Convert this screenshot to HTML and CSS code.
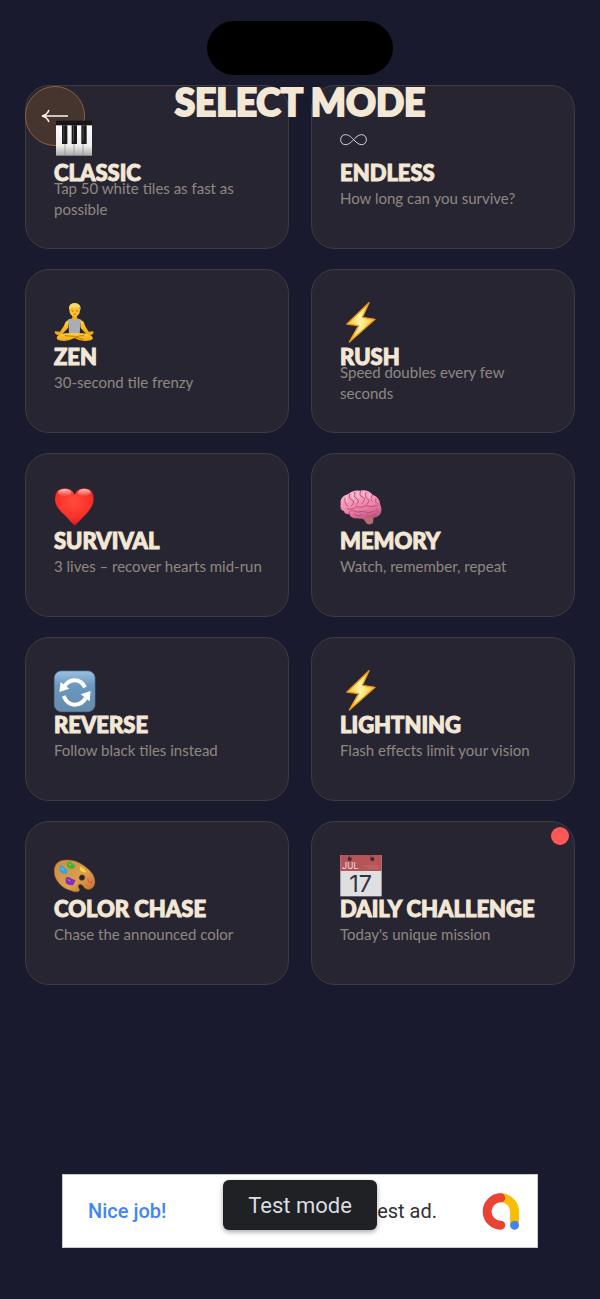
FILE: index.html
```html
<!DOCTYPE html>
<html lang="en">
<head>
  <meta charset="UTF-8">
  <meta name="viewport" content="width=device-width, initial-scale=1.0">
  <title>Select Mode</title>
  <link rel="stylesheet" href="styles.css">
</head>
<body>
  <div class="island"></div>

  <header class="header">
    <button class="back-btn" type="button" aria-label="Back">
      <svg viewBox="0 0 28 14" width="28" height="14" fill="none" stroke="#fdf3e7" stroke-width="1.6">
        <path d="M27 7H2M8 1Q6 6 1 7Q6 8 8 13" />
      </svg>
    </button>
    <h1>SELECT MODE</h1>
  </header>

  <main class="mode-grid">
    <button class="mode-card" type="button">
      <svg class="icon" viewBox="0 0 126 126">
        <defs>
          <linearGradient id="keys" x1="0" y1="0" x2="0" y2="1">
            <stop offset="0" stop-color="#fff" />
            <stop offset="0.7" stop-color="#eee" />
            <stop offset="1" stop-color="#aaa" />
          </linearGradient>
        </defs>
        <rect x="6" y="8" width="108" height="102" fill="url(#keys)" />
        <path d="M33 70V110M60 70V110M87 70V110" stroke="#888" stroke-width="2" />
        <rect x="6" y="5" width="108" height="14" fill="#161619" />
        <path d="M24 19h16v56H24zM53 19h16v56H53zM82 19h16v56H82z" fill="#18181a" />
        <path d="M28 20h3v48h-3zM57 20h3v48h-3zM86 20h3v48h-3z" fill="#48484b" />
      </svg>
      <span class="mode-title">CLASSIC</span>
      <span class="mode-desc"><span>Tap 50 white tiles as fast as possible</span></span>
    </button>

    <button class="mode-card" type="button">
      <svg class="icon" viewBox="0 0 126 126" fill="none" stroke="#d5d1d5" stroke-width="3">
        <path d="M41 62C31 51 24 47 16 47C7 47 2 54 2 62C2 70 7 77 16 77C24 77 31 73 41 62C51 51 58 47 65 47C74 47 79 54 79 62C79 70 74 77 65 77C58 77 51 73 41 62Z" />
      </svg>
      <span class="mode-title">ENDLESS</span>
      <span class="mode-desc"><span>How long can you survive?</span></span>
    </button>

    <button class="mode-card" type="button">
      <svg class="icon" viewBox="0 0 126 126">
        <defs>
          <linearGradient id="skin" x1="0" y1="0" x2="0" y2="1">
            <stop offset="0" stop-color="#ffd23c" />
            <stop offset="1" stop-color="#f5a40f" />
          </linearGradient>
        </defs>
        <path d="M46 50Q34 52 30 68L18 86L3 85Q0 91 9 96L23 95L42 75ZM78 50Q90 52 93 68L104 86L117 85Q122 91 112 96L99 95L80 75Z" fill="url(#skin)" />
        <path d="M55 34h14v18H55z" fill="#eda313" />
        <path d="M43 49Q62 43 80 49L77 92Q61 98 45 92Z" fill="#a9adb5" />
        <path d="M54 46Q62 59 70 46L67 43H57Z" fill="#f4b01c" />
        <path d="M8 106Q9 92 36 91Q61 89 86 91Q113 92 117 106Q115 114 91 114Q74 113 61 105Q48 113 31 114Q11 114 8 106Z" fill="url(#skin)" />
        <path d="M32 98Q58 96 89 110M91 98Q76 96 64 104" fill="none" stroke="#b96809" stroke-width="2.5" />
        <ellipse cx="62" cy="21" rx="16" ry="20" fill="#ffc22b" />
        <path d="M45 20Q43 0 62 0Q81 0 80 21Q76 17 75 11Q59 15 49 12Q48 18 45 20Z" fill="#f6dc73" />
        <path d="M53 23q3 3 6 0M66 23q3 3 6 0" fill="none" stroke="#70430e" stroke-width="2" />
        <path d="M58 33Q62 36 67 33" fill="none" stroke="#bd4e1c" stroke-width="2" />
      </svg>
      <span class="mode-title">ZEN</span>
      <span class="mode-desc"><span>30-second tile frenzy</span></span>
    </button>

    <button class="mode-card" type="button">
      <svg class="icon" viewBox="0 0 126 126">
        <defs>
          <linearGradient id="bolt" x1="0" y1="0" x2="1" y2="0">
            <stop offset="0" stop-color="#ffb61f" />
            <stop offset="0.45" stop-color="#fff5a8" />
            <stop offset="1" stop-color="#ffc530" />
          </linearGradient>
        </defs>
        <path d="M87 -1L21 63L56 68L28 117L105 49L67 43Z" fill="url(#bolt)" stroke="#f39a13" stroke-width="4" stroke-linejoin="round" />
      </svg>
      <span class="mode-title">RUSH</span>
      <span class="mode-desc"><span>Speed doubles every few seconds</span></span>
    </button>

    <button class="mode-card" type="button">
      <svg class="icon" viewBox="0 0 126 126">
        <defs>
          <radialGradient id="heart" cx="0.48" cy="0.35" r="0.7">
            <stop offset="0" stop-color="#ff4b3c" />
            <stop offset="0.65" stop-color="#fa3029" />
            <stop offset="1" stop-color="#c61219" />
          </radialGradient>
          <linearGradient id="shine" x1="0" y1="0" x2="0" y2="1">
            <stop offset="0" stop-color="#fff" stop-opacity="0.7" />
            <stop offset="1" stop-color="#fff" stop-opacity="0" />
          </linearGradient>
        </defs>
        <path d="M62 116Q55 111 36 88Q3 62 3 35Q3 4 33 4Q53 4 62 23Q71 4 91 4Q119 4 119 35Q119 60 90 88Q70 109 62 116Z" fill="url(#heart)" />
        <ellipse cx="32" cy="17" rx="20" ry="11" fill="url(#shine)" />
        <ellipse cx="91" cy="17" rx="19" ry="11" fill="url(#shine)" />
      </svg>
      <span class="mode-title">SURVIVAL</span>
      <span class="mode-desc"><span>3 lives – recover hearts mid-run</span></span>
    </button>

    <button class="mode-card" type="button">
      <svg class="icon" viewBox="0 0 126 126">
        <defs>
          <linearGradient id="brain" x1="0.3" y1="0" x2="0.7" y2="1">
            <stop offset="0" stop-color="#ffb6cd" />
            <stop offset="0.6" stop-color="#ef81a9" />
            <stop offset="1" stop-color="#bd557d" />
          </linearGradient>
        </defs>
        <path d="M68 84Q87 80 101 87L99 108Q87 116 79 109Q73 97 66 94Z" fill="#b76c70" />
        <path d="M2 52Q-1 28 23 22Q39 8 60 11Q83 6 98 23Q119 30 120 51Q130 72 118 85Q105 98 83 92Q66 98 52 94Q32 96 29 82Q14 83 12 73Q-1 70 2 52Z" fill="url(#brain)" />
        <g fill="none" stroke="#bb5179" stroke-width="3" stroke-linecap="round">
          <path d="M22 66Q42 68 48 59Q65 64 77 56Q95 62 113 55M29 82Q22 70 39 71Q55 79 67 73Q86 81 103 73" />
          <path d="M15 34Q13 51 23 57M29 21Q25 35 36 39T34 57M45 16Q38 28 50 35T48 53M62 12Q55 27 68 30T65 51M79 16Q71 27 82 35T80 52M97 25Q87 36 97 43M108 35Q102 46 114 51M43 81Q54 91 65 83M79 84Q95 91 109 81M112 65Q102 72 116 76" />
        </g>
        <path d="M20 29Q16 41 22 47M39 20Q34 29 42 37M55 17Q51 26 57 33M72 17Q68 24 75 31M89 22Q84 29 91 35" fill="none" stroke="#ffd3df" stroke-width="3" />
      </svg>
      <span class="mode-title">MEMORY</span>
      <span class="mode-desc"><span>Watch, remember, repeat</span></span>
    </button>

    <button class="mode-card" type="button">
      <svg class="icon" viewBox="0 0 126 126">
        <defs>
          <linearGradient id="tile" x1="0" y1="0" x2="0" y2="1">
            <stop offset="0" stop-color="#9bc1e1" />
            <stop offset="0.35" stop-color="#6c98bf" />
            <stop offset="1" stop-color="#658bad" />
          </linearGradient>
        </defs>
        <rect x="1" y="0" width="122" height="122" rx="21" fill="url(#tile)" stroke="#587e9f" stroke-width="2" />
        <path d="M93 49Q82 27 60 28Q42 29 31 46M29 75Q40 101 62 101Q85 100 95 81" fill="none" stroke="#fff" stroke-width="12" />
        <path d="M20 33L16 63L46 53ZM80 70L110 60L107 91Z" fill="#fff" />
      </svg>
      <span class="mode-title">REVERSE</span>
      <span class="mode-desc"><span>Follow black tiles instead</span></span>
    </button>

    <button class="mode-card" type="button">
      <svg class="icon" viewBox="0 0 126 126">
        <path d="M87 -1L21 63L56 68L28 117L105 49L67 43Z" fill="url(#bolt)" stroke="#f39a13" stroke-width="4" stroke-linejoin="round" />
      </svg>
      <span class="mode-title">LIGHTNING</span>
      <span class="mode-desc"><span>Flash effects limit your vision</span></span>
    </button>

    <button class="mode-card" type="button">
      <svg class="icon" viewBox="0 0 126 126">
        <defs>
          <linearGradient id="wood" x1="0" y1="0" x2="1" y2="1">
            <stop offset="0" stop-color="#c98d42" />
            <stop offset="0.6" stop-color="#dda050" />
            <stop offset="1" stop-color="#ba7128" />
          </linearGradient>
        </defs>
        <path d="M1 42Q5 16 34 15Q64 12 91 33Q125 57 123 83Q118 105 100 103Q91 101 87 92Q78 84 73 91Q71 97 77 105Q73 115 52 107Q25 101 10 78Q-1 63 1 42ZM80 60Q72 65 77 74Q85 80 92 72Q96 61 85 59Z" fill="url(#wood)" fill-rule="evenodd" stroke="#a8662a" stroke-width="1.5" />
        <path d="M40 21Q52 17 56 28L65 31L58 41Q43 42 39 32Z" fill="#39b62e" />
        <path d="M17 33Q29 28 32 39L42 44L38 57L26 56Q15 50 17 43Z" fill="#35a6df" />
        <path d="M79 34Q91 39 97 52L87 52L77 45Z" fill="#f7d83b" />
        <path d="M35 69Q44 62 53 71L65 76L57 91Q43 92 35 84Z" fill="#852db8" />
        <path d="M99 68Q112 72 116 87L103 82Z" fill="#f15445" />
        <path d="M44 26l7 5M22 39l7 6M41 73l8 5M104 73l5 5" stroke="#fff" stroke-opacity="0.45" stroke-width="3" />
      </svg>
      <span class="mode-title">COLOR CHASE</span>
      <span class="mode-desc"><span>Chase the announced color</span></span>
    </button>

    <button class="mode-card" type="button">
      <svg class="icon" viewBox="0 0 126 126">
        <rect x="1" y="0" width="124" height="124" fill="#dfdfe1" />
        <rect x="1" y="0" width="124" height="48" fill="#b55558" />
        <circle cx="29" cy="12" r="6" fill="#332a31" />
        <circle cx="97" cy="12" r="6" fill="#332a31" />
        <path d="M28 1v10M90 1l6 9" stroke="#6c3940" stroke-width="3" />
        <path d="M70 33h45M83 39h34" stroke="#c56c6e" stroke-width="3" />
        <text class="cal-month" x="6" y="42">JUL</text>
        <text class="cal-day" x="62" y="111">17</text>
      </svg>
      <span class="mode-title">DAILY CHALLENGE</span>
      <span class="mode-desc"><span>Today's unique mission</span></span>
      <span class="badge"></span>
    </button>
  </main>

  <!-- Ad banner -->
  <aside class="ad">
    <span class="ad-praise">Nice job!</span>
    <span class="ad-text">This is a test ad.</span>
    <svg class="ad-logo" viewBox="0 0 108 108" fill="none" stroke-width="26" stroke-linecap="round">
      <path d="M55 14A40 40 0 0 1 95 54V94" stroke="#fbbc04" />
      <path d="M55 14A40 40 0 0 0 55 94" stroke="#ea4335" />
      <circle cx="95" cy="94" r="13" fill="#4285f4" />
    </svg>
    <span class="toast">Test mode</span>
  </aside>
</body>
</html>
```
FILE: styles.css
```css
/* Global Styles */
* {
  box-sizing: border-box;
}
body {
  margin: 0;
  min-height: 100vh;
  padding: 21px 25px 51px;
  display: flex;
  flex-direction: column;
  position: relative;
  background: #1a1a2e;
  color: #f3e7d5;
  font-family: Lato, "Open Sans", sans-serif;
  font-variant-ligatures: none;
}
button {
  font-family: inherit;
  color: inherit;
  cursor: pointer;
}

.island {
  width: 186px;
  height: 54px;
  margin: 0 auto 10px;
  border-radius: 27px;
  background: #000;
}

/* Header, floats over the first row of cards */
.header {
  position: absolute;
  top: 86px;
  left: 25px;
  right: 25px;
  z-index: 1;
  pointer-events: none;
}
.back-btn {
  position: absolute;
  top: 0;
  left: 0;
  width: 60px;
  height: 60px;
  padding: 0;
  display: flex;
  align-items: center;
  justify-content: center;
  border: 1px solid #8b6238;
  border-radius: 50%;
  background: #46352f;
  pointer-events: auto;
}
h1 {
  margin: 0;
  font-size: 37px;
  line-height: 32px;
  font-weight: 900;
  text-align: center;
  -webkit-text-stroke: 2px #f3e7d5;
}

/* Mode cards */
.mode-grid {
  display: grid;
  grid-template-columns: 1fr 1fr;
  gap: 20px 22px;
  margin-bottom: 40px;
}
.mode-card {
  position: relative;
  display: flex;
  flex-direction: column;
  align-items: flex-start;
  padding: 33px 20px 39px 28px;
  border: 1px solid #3f3a40;
  border-radius: 24px;
  background: #282533;
  text-align: left;
}
.icon {
  position: relative;
  z-index: 2;
  width: 42px;
  height: 42px;
  overflow: visible;
}
.mode-title {
  margin-bottom: 3px;
  font-size: 22px;
  line-height: 24px;
  font-weight: 900;
  -webkit-text-stroke: 1px #f3e7d5;
}
.mode-desc {
  display: flex;
  align-items: center;
  height: 21px;
  font-size: 15px;
  line-height: 21px;
  color: #8e8880;
}
.badge {
  position: absolute;
  top: 5px;
  right: 5px;
  width: 18px;
  height: 18px;
  border-radius: 50%;
  background: #ff5757;
}
.cal-month {
  font: 28px Roboto, sans-serif;
  fill: #eadcdd;
}
.cal-day {
  font: 70px Inter, sans-serif;
  fill: #333338;
  text-anchor: middle;
}

/* Ad banner */
.ad {
  position: relative;
  display: flex;
  align-items: center;
  width: 476px;
  max-width: 100%;
  height: 74px;
  margin: auto auto 0;
  padding: 0 18px 0 25px;
  border: 1px solid #c9cad6;
  background: #fff;
  font-family: Roboto, sans-serif;
  font-size: 20px;
}
.ad-praise {
  font-weight: 500;
  color: #4285f4;
}
.ad-text {
  margin-left: auto;
  margin-right: 45px;
  color: #303134;
}
.ad-logo {
  width: 37px;
  height: 37px;
  overflow: visible;
}
.toast {
  position: absolute;
  top: 5px;
  left: 50%;
  transform: translateX(-50%);
  width: 154px;
  height: 50px;
  line-height: 52px;
  border-radius: 6px;
  background: #202124;
  color: #dadce0;
  font-size: 22px;
  text-align: center;
  box-shadow: 0 2px 5px rgba(0, 0, 0, 0.35);
}
```
